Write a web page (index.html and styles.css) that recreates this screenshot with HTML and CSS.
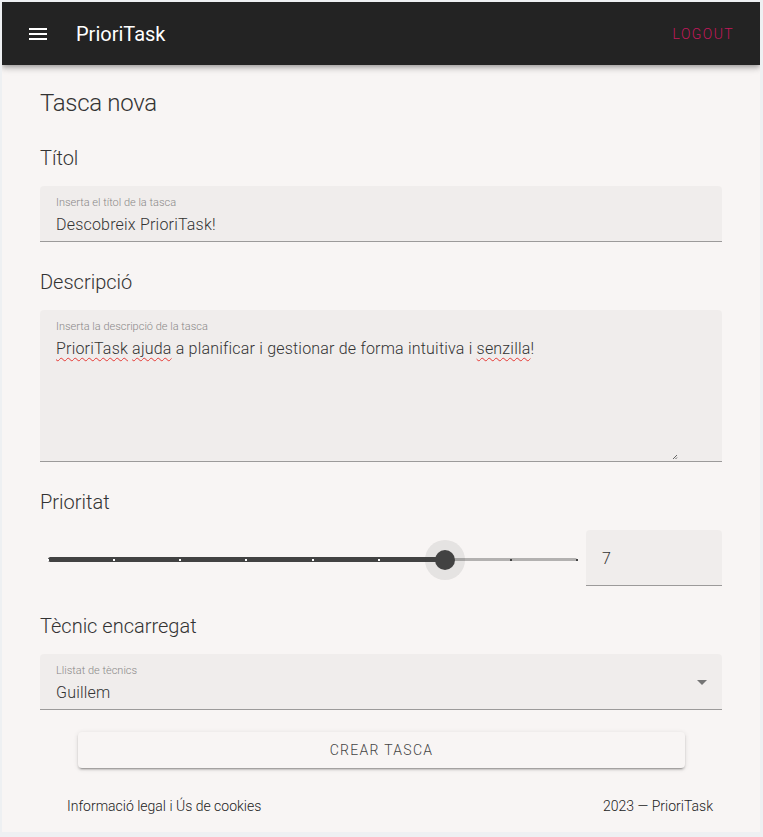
FILE: index.html
```html
<!DOCTYPE html>
<html lang="ca">
<head>
<meta charset="utf-8">
<title>PrioriTask</title>
<link rel="stylesheet" href="styles.css">
</head>
<body>
<div class="app">
  <header class="appbar">
    <button class="menu-btn" aria-label="menu">
      <svg width="24" height="24" viewBox="0 0 24 24"><path d="M3 6h18v2H3zM3 11h18v2H3zM3 16h18v2H3z" fill="#fff"/></svg>
    </button>
    <div class="brand">PrioriTask</div>
    <div class="spacer"></div>
    <a class="logout">LOGOUT</a>
  </header>

  <main class="main">
    <h1 class="page-title">Tasca nova</h1>

    <h2 class="section-title">Títol</h2>
    <div class="field">
      <span class="field-label">Inserta el títol de la tasca</span>
      <span class="field-value">Descobreix PrioriTask!</span>
    </div>

    <h2 class="section-title">Descripció</h2>
    <div class="field field-area">
      <span class="field-label">Inserta la descripció de la tasca</span>
      <span class="field-value"><span class="typo">PrioriTask</span> <span class="typo">ajuda</span> a planificar i gestionar de forma intuitiva i <span class="typo">senzilla</span>!</span>
      <svg class="resize" width="6" height="6" viewBox="0 0 6 6"><path d="M5 1L1 5M5 3.5L3.5 5" stroke="#666" stroke-width="1"/></svg>
    </div>

    <h2 class="section-title">Prioritat</h2>
    <div class="slider-row">
      <div class="slider">
        <div class="track">
          <div class="track-fill" style="width:75%"></div>
          <span class="tick on" style="left:0%"></span>
          <span class="tick on" style="left:12.5%"></span>
          <span class="tick on" style="left:25%"></span>
          <span class="tick on" style="left:37.5%"></span>
          <span class="tick on" style="left:50%"></span>
          <span class="tick on" style="left:62.5%"></span>
          <span class="tick" style="left:87.5%"></span>
          <span class="tick" style="left:100%"></span>
          <span class="thumb" style="left:75%"></span>
        </div>
      </div>
      <div class="field field-num">
        <span class="field-value">7</span>
      </div>
    </div>

    <h2 class="section-title">Tècnic encarregat</h2>
    <div class="field field-select">
      <div class="select-text">
        <span class="field-label">Llistat de tècnics</span>
        <span class="field-value">Guillem</span>
      </div>
      <svg class="arrow" width="10" height="5" viewBox="0 0 10 5"><path d="M0 0h10L5 5z" fill="#757575"/></svg>
    </div>

    <div class="btn-wrap">
      <button class="btn">CREAR TASCA</button>
    </div>
  </main>

  <footer class="footer">
    <span>Informació legal i Ús de cookies</span>
    <span>2023 — PrioriTask</span>
  </footer>
</div>
</body>
</html>
```

FILE: styles.css
```css
* { box-sizing: border-box; }
html, body { margin: 0; padding: 0; }
body {
  background: #eef0f2;
  font-family: Roboto, "Open Sans", sans-serif;
  color: #333;
  height: 837px;
  overflow: hidden;
}
.app {
  margin: 2px 3px 0 2px;
  height: 830px;
  background: #f8f5f4;
  display: flex;
  flex-direction: column;
  overflow: hidden;
}
.appbar {
  height: 63px;
  background: #232323;
  display: flex;
  align-items: center;
  padding: 0 26px 0 24px;
  box-shadow: 0 2px 4px -1px rgba(0,0,0,.2), 0 4px 5px 0 rgba(0,0,0,.14), 0 1px 10px 0 rgba(0,0,0,.12);
  position: relative;
  z-index: 2;
  flex: none;
}
.menu-btn {
  background: none; border: 0; padding: 0; margin: 0;
  width: 24px; height: 24px; display: flex;
}
.brand {
  color: #fff;
  font-size: 20px;
  font-weight: 400;
  margin-left: 26px;
}
.spacer { flex: 1; }
.logout {
  color: #c2185b;
  font-size: 14px;
  letter-spacing: 1.4px;
  font-weight: 300;
}
.main {
  flex: 1;
  padding: 22px 38px 0 38px;
  display: flex;
  flex-direction: column;
}
.page-title {
  margin: 0;
  font-size: 24px;
  line-height: 32px;
  font-weight: 300;
  color: #333;
  letter-spacing: -0.3px;
}
.section-title {
  margin: 26px 0 14px;
  font-size: 20px;
  line-height: 28px;
  font-weight: 300;
  color: #333;
}
.page-title + .section-title { margin-top: 25px; }
.field {
  background: #f0edec;
  border-radius: 4px 4px 0 0;
  border-bottom: 1px solid #9c9a9a;
  height: 56px;
  padding: 10px 16px 0;
  display: flex;
  flex-direction: column;
  position: relative;
}
.field-label {
  font-size: 11px;
  line-height: 14px;
  color: #8a8888;
  font-weight: 300;
}
.field-value {
  margin-top: 4px;
  font-size: 16px;
  line-height: 22px;
  color: #333;
  font-weight: 300;
  letter-spacing: 0.2px;
}
.field-area { height: 152px; }
.typo {
  text-decoration: underline wavy #e53935;
  text-decoration-thickness: 1px;
  text-underline-offset: 3px;
}
.resize { position: absolute; right: 44px; bottom: 1px; }
.slider-row {
  display: flex;
  gap: 8px;
  height: 56px;
}
.slider {
  flex: 1;
  padding: 3px 1px 0 8px;
  display: flex;
  align-items: center;
}
.track {
  position: relative;
  width: 100%;
  height: 3px;
  border-radius: 2px;
  background: #b3b1b0;
}
.track-fill {
  position: absolute; left: 0; top: -1px; bottom: -1px;
  background: #424242;
  border-radius: 3px;
}
.tick {
  position: absolute;
  top: 0.5px;
  width: 2px; height: 2px;
  margin-left: -1px;
  background: #424242;
}
.tick.on { background: #fff; }
.thumb {
  position: absolute;
  top: 50%;
  width: 20px; height: 20px;
  margin: -10px 0 0 -10px;
  border-radius: 50%;
  background: #424242;
  box-shadow: 0 0 0 10px rgba(66,66,66,.1);
}
.field-num {
  width: 136px;
  flex: none;
  justify-content: center;
  padding: 0 16px;
}
.field-num .field-value { margin-top: 2px; }
.field-select {
  flex-direction: row;
  align-items: flex-start;
}
.select-text { flex: 1; display: flex; flex-direction: column; }
.arrow { margin-top: 16px; margin-right: -1px; }
.btn-wrap {
  padding: 22px 37px 0 38px;
}
.btn {
  width: 100%;
  height: 36px;
  border: 0;
  border-radius: 4px;
  background: #f8f5f4;
  box-shadow: 0 3px 1px -2px rgba(0,0,0,.2), 0 2px 2px 0 rgba(0,0,0,.14), 0 1px 5px 0 rgba(0,0,0,.12);
  font-family: Roboto, "Open Sans", sans-serif;
  font-size: 14px;
  letter-spacing: 1.3px;
  font-weight: 300;
  color: #444;
}
.footer {
  flex: none;
  height: 52px;
  display: flex;
  justify-content: space-between;
  align-items: center;
  padding: 0 47px 0 65px;
  font-size: 14px;
  font-weight: 300;
  color: #222;
}
```
